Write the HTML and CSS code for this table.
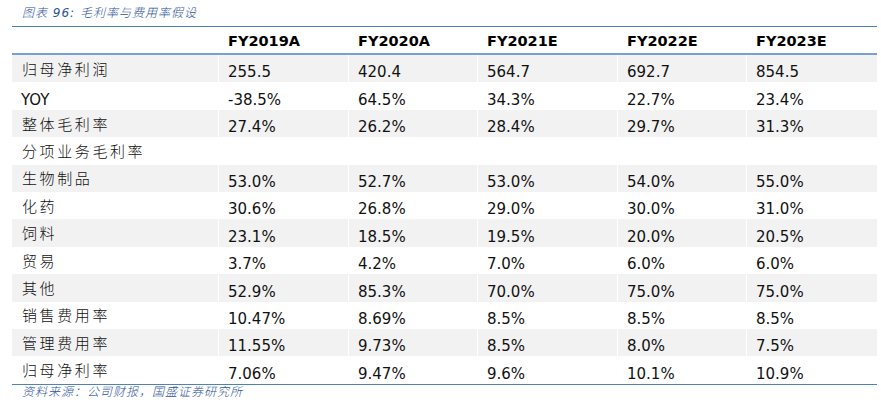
FILE: index.html
```html
<!DOCTYPE html>
<html lang="zh-CN">
<head>
<meta charset="utf-8">
<title>毛利率与费用率假设</title>
<link rel="stylesheet" href="styles.css">
</head>
<body>
<div class="page">
  <div class="title">图表 96: 毛利率与费用率假设</div>
  <div class="table">
    <div class="row head">
      <div class="cell"></div>
      <div class="cell">FY2019A</div>
      <div class="cell">FY2020A</div>
      <div class="cell">FY2021E</div>
      <div class="cell">FY2022E</div>
      <div class="cell">FY2023E</div>
    </div>
    <div class="row shade">
      <div class="cell label">归母净利润</div>
      <div class="cell">255.5</div><div class="cell">420.4</div><div class="cell">564.7</div><div class="cell">692.7</div><div class="cell">854.5</div>
    </div>
    <div class="row">
      <div class="cell latin">YOY</div>
      <div class="cell">-38.5%</div><div class="cell">64.5%</div><div class="cell">34.3%</div><div class="cell">22.7%</div><div class="cell">23.4%</div>
    </div>
    <div class="row shade">
      <div class="cell label">整体毛利率</div>
      <div class="cell">27.4%</div><div class="cell">26.2%</div><div class="cell">28.4%</div><div class="cell">29.7%</div><div class="cell">31.3%</div>
    </div>
    <div class="row">
      <div class="cell label">分项业务毛利率</div>
      <div class="cell"></div><div class="cell"></div><div class="cell"></div><div class="cell"></div><div class="cell"></div>
    </div>
    <div class="row shade">
      <div class="cell label">生物制品</div>
      <div class="cell">53.0%</div><div class="cell">52.7%</div><div class="cell">53.0%</div><div class="cell">54.0%</div><div class="cell">55.0%</div>
    </div>
    <div class="row">
      <div class="cell label">化药</div>
      <div class="cell">30.6%</div><div class="cell">26.8%</div><div class="cell">29.0%</div><div class="cell">30.0%</div><div class="cell">31.0%</div>
    </div>
    <div class="row shade">
      <div class="cell label">饲料</div>
      <div class="cell">23.1%</div><div class="cell">18.5%</div><div class="cell">19.5%</div><div class="cell">20.0%</div><div class="cell">20.5%</div>
    </div>
    <div class="row">
      <div class="cell label">贸易</div>
      <div class="cell">3.7%</div><div class="cell">4.2%</div><div class="cell">7.0%</div><div class="cell">6.0%</div><div class="cell">6.0%</div>
    </div>
    <div class="row shade">
      <div class="cell label">其他</div>
      <div class="cell">52.9%</div><div class="cell">85.3%</div><div class="cell">70.0%</div><div class="cell">75.0%</div><div class="cell">75.0%</div>
    </div>
    <div class="row">
      <div class="cell label">销售费用率</div>
      <div class="cell">10.47%</div><div class="cell">8.69%</div><div class="cell">8.5%</div><div class="cell">8.5%</div><div class="cell">8.5%</div>
    </div>
    <div class="row shade">
      <div class="cell label">管理费用率</div>
      <div class="cell">11.55%</div><div class="cell">9.73%</div><div class="cell">8.5%</div><div class="cell">8.0%</div><div class="cell">7.5%</div>
    </div>
    <div class="row">
      <div class="cell label">归母净利率</div>
      <div class="cell">7.06%</div><div class="cell">9.47%</div><div class="cell">9.6%</div><div class="cell">10.1%</div><div class="cell">10.9%</div>
    </div>
  </div>
  <div class="source">资料来源：公司财报，国盛证券研究所</div>
</div>
</body>
</html>
```

FILE: styles.css
```css
html, body {
  margin: 0;
  padding: 0;
  background: #ffffff;
}

.page {
  padding-left: 12px;
  width: 865px;
  font-family: "DejaVu Sans", "Noto Sans CJK SC", sans-serif;
  color: #111111;
}

.title {
  box-sizing: border-box;
  height: 26px;
  padding-top: 5px;
  padding-left: 10px;
  font-size: 12px;
  line-height: 16px;
  font-style: italic;
  font-weight: 300;
  letter-spacing: 1px;
  color: #2d549c;
}

.table {
  border-top: 1px solid #4a7ebb;
  border-bottom: 1px solid #4f81bd;
}

.row {
  display: grid;
  grid-template-columns: 206px 129px 128px 139px 128px 130px;
  column-gap: 1px;
  height: 27.42px;
  background: #ffffff;
}

.row.head {
  height: 26px;
  border-bottom: 2px solid #7a9fd4;
}

.cell {
  display: flex;
  align-items: flex-end;
  padding-left: 9px;
  font-size: 15px;
  line-height: 20px;
  background: #ffffff;
  white-space: nowrap;
}

.shade .cell {
  background: #f2f2f2;
}

.head .cell {
  align-items: center;
  padding-top: 1px;
  font-size: 14.5px;
  font-weight: bold;
  color: #000000;
}

.cell.label {
  align-items: center;
  padding-left: 10px;
  font-family: "Noto Sans CJK SC", sans-serif;
  font-size: 15px;
  font-weight: 300;
  letter-spacing: 2.6px;
  color: #111111;
}

.cell.latin {
  padding-left: 9px;
}

.source {
  padding-left: 10px;
  font-size: 12px;
  line-height: 14px;
  font-style: italic;
  font-weight: 300;
  letter-spacing: 1px;
  color: #2d549c;
}
```
